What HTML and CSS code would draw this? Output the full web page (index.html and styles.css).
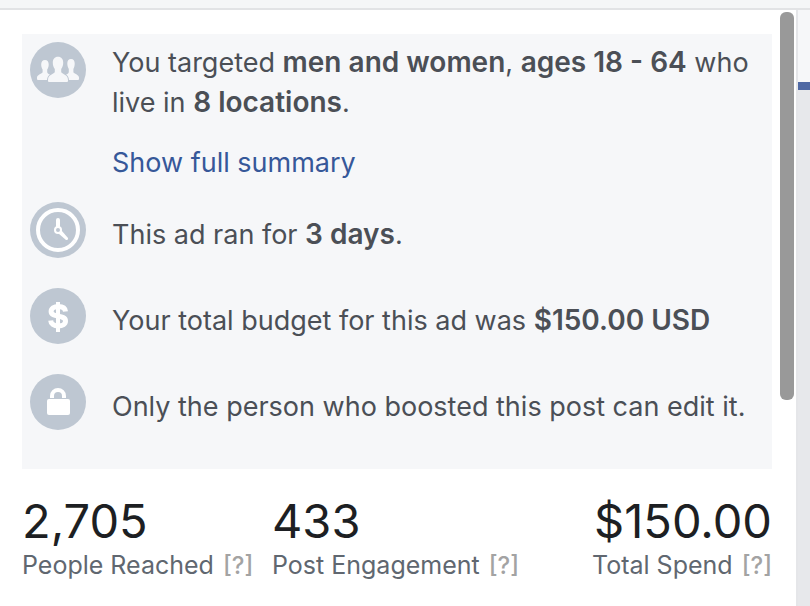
FILE: index.html
```html
<!DOCTYPE html>
<html lang="en">
<head>
    <meta charset="UTF-8">
    <meta name="viewport" content="width=device-width, initial-scale=1">
    <title>Ad results</title>
    <link rel="stylesheet" href="styles.css">
</head>
<body>
    <div class="top-bar"></div>
    <div class="layout">
        <main class="panel">
            <ul class="summary">
                <li class="summary-row">
                    <svg class="icon" viewBox="0 0 56 56" aria-hidden="true">
                        <circle class="disc" cx="28" cy="28" r="28"/>
                        <path class="shape" d="M15 18c-2.600 0-3.800 1.900-3.800 4.600 0 2.100.6 3.700 1.400 4.800v2.800c-.3 1.600-5.600 2.200-5.600 5.300v1.500q0 1 1 1h11c.2-2.600 1.200-4.400 1.600-4.900-1.200-1-3-1.400-3.400-2.900v-2.800c.9-1.100 1.500-2.700 1.500-4.800 0-2.700-1.100-4.600-3.700-4.600z"/>
                        <path class="shape" d="M41 17c2.600 0 3.700 1.900 3.700 4.600 0 2.100-.5 4.200-1.300 5.300v3.300c.5 1.600 5.600 2.200 5.600 5.300v1.500q0 1-1 1H37c-.2-2.600-1.100-4.200-1.600-4.800 1.200-1 3-1.500 3.400-3v-3.300c-.8-1.100-1.500-3.200-1.500-5.300 0-2.700 1.100-4.600 3.700-4.600z"/>
                        <path class="shape front" d="M28 14.800c-3.400 0-5.200 2.500-5.200 5.900 0 2.600.8 4.900 2 6.300v3c-.5 2.200-6.800 2.200-6.800 8v1q0 1 1 1h18q1 0 1-1v-1c0-5.800-6.300-5.800-6.800-8v-3c1.200-1.400 2-3.700 2-6.300 0-3.400-1.800-5.900-5.200-5.900z"/>
                    </svg>
                    <div class="text">
                        <p>You targeted <strong>men and women</strong>, <strong>ages 18 - 64</strong> who live in <strong>8 locations</strong>.</p>
                        <a class="more-link" href="#">Show full summary</a>
                    </div>
                </li>
                <li class="summary-row single">
                    <svg class="icon" viewBox="0 0 56 56" aria-hidden="true">
                        <circle class="disc" cx="28" cy="28" r="28"/>
                        <circle class="line" cx="28" cy="28" r="20" stroke-width="4"/>
                        <path class="line" d="M28 18v8" stroke-width="4"/>
                        <path class="shape solid" d="M28.500 31.500l3-3 6.500 7.500q.5 2-2 2z"/>
                        <circle class="shape solid" cx="28" cy="28" r="4"/>
                        <circle class="disc" cx="28" cy="28" r="2"/>
                    </svg>
                    <p class="text">This ad ran for <strong>3 days</strong>.</p>
                </li>
                <li class="summary-row single">
                    <svg class="icon" viewBox="0 0 56 56" aria-hidden="true">
                        <circle class="disc" cx="28" cy="28" r="28"/>
                        <path class="line dollar" d="M35.500 23.500c-.3-3.200-3-5-7.200-5-4.300 0-7.200 2-7.200 5 0 6.500 14.400 2.800 14.400 9.500 0 3-3 5-7.200 5-4.400 0-7.400-2-7.600-5.500" stroke-width="5"/>
                        <path class="line dollar" d="M28 14v30" stroke-width="4"/>
                    </svg>
                    <p class="text">Your total budget for this ad was <strong>$150.00 USD</strong></p>
                </li>
                <li class="summary-row single">
                    <svg class="icon" viewBox="0 0 56 56" aria-hidden="true">
                        <circle class="disc" cx="28" cy="28" r="28"/>
                        <rect class="shape solid" x="17" y="25" width="23" height="16" rx="2"/>
                        <path class="line lock" d="M22 24v-2a6 6 0 0 1 12 0v2" stroke-width="4"/>
                    </svg>
                    <p class="text">Only the person who boosted this post can edit it.</p>
                </li>
            </ul>

            <div class="stats">
                <div class="stat">
                    <div class="value">2,705</div>
                    <div class="label">People Reached <a class="help" href="#">[?]</a></div>
                </div>
                <div class="stat">
                    <div class="value">433</div>
                    <div class="label">Post Engagement <a class="help" href="#">[?]</a></div>
                </div>
                <div class="stat right">
                    <div class="value">$150.00</div>
                    <div class="label">Total Spend <a class="help" href="#">[?]</a></div>
                </div>
            </div>
        </main>
        <div class="scroll-rail">
            <div class="scroll-thumb"></div>
        </div>
        <aside class="side">
            <div class="side-head"></div>
        </aside>
    </div>
</body>
</html>
```
FILE: styles.css
```css
* {
    box-sizing: border-box;
}

body {
    margin: 0;
    min-height: 100vh;
    display: flex;
    flex-direction: column;
    background: #fff;
    color: #4b4f56;
    font-family: Inter, "Liberation Sans", sans-serif;
    font-size: 27px;
    line-height: 40px;
}

p {
    margin: 0;
}

a {
    text-decoration: none;
}

strong {
    font-size: 28px;
    font-weight: 600;
    line-height: 1;
}

.top-bar {
    height: 10px;
    background: #f5f6f7;
    border-bottom: 2px solid #e2e3e5;
}

.layout {
    flex: 1;
    display: flex;
}

.panel {
    flex: 1;
    min-width: 0;
    padding: 24px 8px 20px 22px;
}

/* Summary */
.summary {
    display: flex;
    flex-direction: column;
    gap: 19px;
    margin: 0;
    padding: 8px 8px 28px;
    list-style: none;
    background: #f6f7f9;
}

.summary-row {
    display: flex;
    align-items: flex-start;
    gap: 26px;
}

.summary-row.single {
    min-height: 67px;
}

.text {
    flex: 1;
    min-width: 0;
    padding-top: 1px;
}

.single .text {
    padding-top: 13px;
}

.more-link {
    display: inline-block;
    margin-top: 20px;
    color: #365899;
}

/* Icons */
.icon {
    flex: none;
    width: 56px;
    height: 56px;
}

.disc {
    fill: #bec7d2;
}

.shape {
    fill: #f6f7f9;
}

.front {
    stroke: #bec7d2;
    stroke-width: 2px;
    paint-order: stroke;
}

.solid {
    fill: #fff;
}

.line {
    fill: none;
    stroke: #fff;
    stroke-linecap: round;
}

.dollar,
.lock {
    stroke-linecap: butt;
}

/* Stats */
.stats {
    display: grid;
    grid-template-columns: repeat(3, 1fr);
    padding-top: 26px;
}

.stat {
    white-space: nowrap;
}

.stat.right {
    text-align: right;
}

.value {
    color: #1d1f23;
    font-size: 47px;
    line-height: 52px;
}

.label {
    color: #606770;
    font-size: 25px;
    line-height: 36px;
}

.help {
    margin-left: 2px;
    color: #a3a3a3;
    font-size: 24px;
    font-weight: 500;
}

/* Scrollbar and right edge */
.scroll-rail {
    flex: none;
    width: 16px;
    padding: 2px 2px 0 0;
}

.scroll-thumb {
    height: 388px;
    border-radius: 6px;
    background: #999;
}

.side {
    flex: none;
    width: 14px;
    border-left: 2px solid #e5e6e9;
    background: #e7e8eb;
}

.side-head {
    height: 80px;
    background: #f6f7f9;
    border-bottom: 8px solid #4f69a4;
}
```
